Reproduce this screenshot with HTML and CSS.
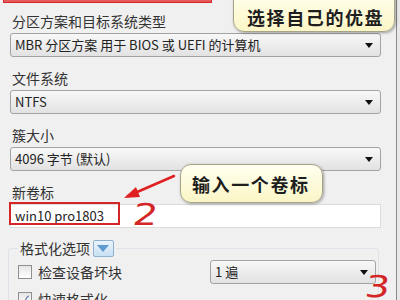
FILE: index.html
```html
<!DOCTYPE html>
<html>
<head>
    <meta charset="UTF-8">
    <title>格式化选项</title>
    <link rel="stylesheet" href="styles.css">
</head>
<body>
    <div class="window">
        <!-- Partition scheme -->
        <div class="label first">分区方案和目标系统类型</div>
        <div class="select">MBR 分区方案 用于 BIOS 或 UEFI 的计算机<span class="arrow"></span></div>

        <!-- File system -->
        <div class="label">文件系统</div>
        <div class="select">NTFS<span class="arrow"></span></div>

        <!-- Cluster size -->
        <div class="label">簇大小</div>
        <div class="select">4096 字节 (默认)<span class="arrow"></span></div>

        <!-- Volume label -->
        <div class="label">新卷标</div>
        <div class="input">win10 pro1803</div>

        <!-- Format options -->
        <div class="group">
            <div class="legend">格式化选项 <span class="toggle"></span></div>
            <div class="row">
                <span class="check"></span>
                <span class="check-text">检查设备坏块</span>
                <div class="select small">1 遍<span class="arrow"></span></div>
            </div>
            <div class="row">
                <span class="check on">&#10003;</span>
                <span class="check-text">快速格式化</span>
            </div>
        </div>

        <!-- Annotations drawn over the dialog -->
        <div class="mark-top"></div>
        <div class="tip tip-disk">选择自己的优盘</div>
        <div class="tip tip-label">输入一个卷标</div>
        <div class="mark-box"></div>
        <svg class="mark-arrow" width="60" height="30" viewBox="0 0 60 30">
            <path d="M52 4 L6 24" stroke="#e02020" stroke-width="2.5" fill="none" stroke-linecap="round"/>
            <path d="M2 26 L14 15 L18 25 Z" fill="#e02020"/>
        </svg>
        <div class="num num-two">2</div>
        <div class="num num-three">3</div>
    </div>
</body>
</html>
```

FILE: styles.css
```css
/* dialog look */
body {
    margin: 0;
    background-color: #e8e8e8;
    font-family: "Noto Sans CJK SC", "DejaVu Sans", sans-serif;
    overflow: hidden;
}

.window {
    position: relative;
    width: 387px;
    height: 300px;
    padding: 0 15px 0 10px;
    box-sizing: border-box;
    width: 397px;
    background-color: #f0f0f0;
    border-right: 1px solid #8a8a8a;
    color: #333;
}

.label {
    font-size: 14px;
    line-height: 18px;
    height: 18px;
    margin-top: 12px;
    margin-left: 2px;
}

.label.first {
    padding-top: 12px;
    margin-top: 0;
}

.select {
    position: relative;
    height: 24px;
    margin-top: 3px;
    padding-left: 4px;
    box-sizing: border-box;
    border: 1px solid #a3a3a3;
    border-radius: 3px;
    background: linear-gradient(#f8f8f8, #e2e2e2);
    font-size: 13px;
    line-height: 22px;
    color: #222;
}

.arrow {
    position: absolute;
    right: 7px;
    top: 9px;
    border-left: 4px solid transparent;
    border-right: 4px solid transparent;
    border-top: 5px solid #111;
}

.input {
    height: 24px;
    margin-top: 3px;
    padding-left: 4px;
    box-sizing: border-box;
    border: 1px solid #dcdcdc;
    background-color: #fff;
    font-size: 13px;
    line-height: 22px;
    color: #222;
}

.group {
    margin: 20px 2px 0 -2px;
    height: 80px;
    border: 1px solid #dde3e8;
    border-radius: 3px;
    padding: 0 0 0 9px;
}

.legend {
    display: flex;
    align-items: center;
    gap: 3px;
    margin-top: -10px;
    padding: 0 2px;
    width: max-content;
    background-color: #f0f0f0;
    font-size: 14px;
    line-height: 18px;
}

.toggle {
    position: relative;
    width: 19px;
    height: 15px;
    border: 1px solid #8fb0cf;
    border-radius: 2px;
    background: linear-gradient(#eaf4fc, #c8e0f4);
}

.toggle::after {
    content: "";
    position: absolute;
    left: 3px;
    top: 4px;
    border-left: 6px solid transparent;
    border-right: 6px solid transparent;
    border-top: 7px solid #5f9bd0;
}

.row {
    display: flex;
    align-items: center;
    height: 24px;
    margin-top: 3px;
}

.check {
    width: 12px;
    height: 12px;
    border: 1px solid #8e8f8f;
    background: linear-gradient(#e6e6e6, #fff);
    margin-right: 6px;
    font-size: 11px;
    line-height: 12px;
    text-align: center;
    color: #2a4c8c;
}

.check-text {
    font-size: 14px;
}

.select.small {
    width: 166px;
    margin: 0 0 0 auto;
    margin-right: 2px;
}

/* annotations */
.mark-top {
    position: absolute;
    left: 3px;
    top: -2px;
    width: 207px;
    height: 4px;
    border: 1px solid #d42626;
    border-top: none;
    background-color: #e85a5a;
}

.tip {
    position: absolute;
    background: linear-gradient(#fffff0, #fbf6c6);
    border: 1px solid #a8a48a;
    border-radius: 11px;
    box-shadow: 1px 1px 3px rgba(0, 0, 0, 0.35);
    font-size: 18px;
    font-weight: bold;
    letter-spacing: 1.6px;
    color: #1e1e1e;
}

.tip-disk {
    left: 233px;
    top: -12px;
    width: 162px;
    height: 44px;
    padding: 6px 0 0 13px;
    box-sizing: border-box;
    line-height: 44px;
}

.tip-label {
    left: 180px;
    top: 164px;
    width: 143px;
    height: 39px;
    padding-left: 11px;
    box-sizing: border-box;
    line-height: 39px;
}

.mark-box {
    position: absolute;
    left: 9px;
    top: 202px;
    width: 111px;
    height: 23px;
    border: 2px solid #d42626;
    box-sizing: border-box;
}

.mark-arrow {
    position: absolute;
    left: 122px;
    top: 172px;
}

.num {
    position: absolute;
    font-family: "DejaVu Sans", sans-serif;
    font-size: 30px;
    line-height: 30px;
    color: #d42626;
    transform: skewX(-8deg) scaleX(1.3);
}

.num-two {
    left: 136px;
    top: 200px;
}

.num-three {
    left: 368px;
    top: 272px;
}
```
